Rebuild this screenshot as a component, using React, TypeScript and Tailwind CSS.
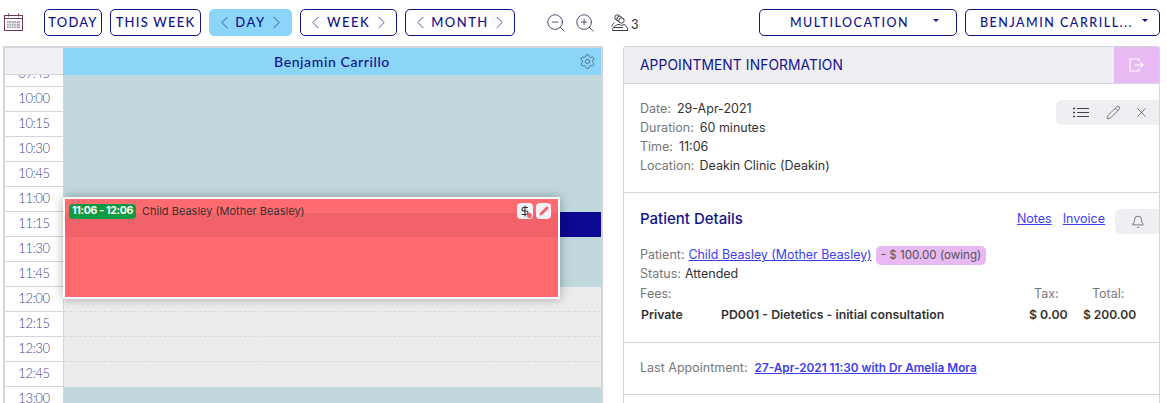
import { ChevronLeft, ChevronRight, ZoomIn, ZoomOut, Settings, Bell, Pencil, X, DollarSign } from "lucide-react";

const navy = "text-[#12128c]";

function NavBtn({ label, w, active }: { label: string; w: string; active?: boolean }) {
  return (
    <div className={`${w} h-[27px] flex items-center justify-between px-[4px] rounded-[5px] border ${active ? "bg-[#8bd5f8] border-[#8bd5f8]" : "bg-white border-[#12128c]"} ${navy}`}>
      <ChevronLeft size={21} strokeWidth={1} className="text-[#3a3a9a]" />
      <span className="text-[13px] font-medium tracking-[1.5px]">{label}</span>
      <ChevronRight size={21} strokeWidth={1} className="text-[#3a3a9a]" />
    </div>
  );
}

function Dropdown({ label, w, center }: { label: string; w: string; center?: boolean }) {
  return (
    <div className={`${w} h-[27px] flex items-center rounded-[5px] border border-[#12128c] ${navy} pr-[11px] pl-[14px]`}>
      <span className={`flex-1 text-[12.5px] font-medium tracking-[1.5px] whitespace-nowrap pt-[2px] ${center ? "text-center pr-[8px]" : ""}`}>{label}</span>
      <span className={`w-0 h-0 border-l-[3px] border-r-[3px] border-t-[3px] border-l-transparent border-r-transparent border-t-[#12128c] -mt-[4px] ${center ? "mr-[6px]" : ""}`} />
    </div>
  );
}

const times = ["09:45", "10:00", "10:15", "10:30", "10:45", "11:00", "11:15", "11:30", "11:45", "12:00", "12:15", "12:30", "12:45", "13:00"];
const hues = ["#c0d8dc", "#c0d8dc", "#c0d8dc", "#c0d8dc", "#c0d8dc", "#c0d8dc", "#0c0890", "#c0d8dc", "#c0d8dc", "#ececec", "#ececec", "#ececec", "#ececec", "#c0d8dc"];

export default function App() {
  return (
    <div className="w-[1167px] h-[403px] overflow-hidden bg-white font-['Lato',sans-serif] flex flex-col">
      {/* toolbar */}
      <div className="h-[46px] shrink-0 flex items-start pt-[9px] pl-[4px]">
        <svg width="20" height="18" viewBox="0 0 20 18" className="mt-[4px] shrink-0" fill="none">
          <rect x="0.5" y="2.5" width="18" height="15" stroke="#6b3a5a" />
          <line x1="1" y1="5.5" x2="18" y2="5.5" stroke="#6b3a5a" />
          <line x1="4.5" y1="0.5" x2="4.5" y2="3.5" stroke="#6b3a5a" />
          <line x1="14.5" y1="0.5" x2="14.5" y2="3.5" stroke="#6b3a5a" />
          <rect x="3" y="8" width="13" height="7" fill="#a8a8b8" />
          <path d="M5 8v7M7.5 8v7M10 8v7M12.5 8v7M3 10.5h13M3 13h13" stroke="#fff" strokeWidth="0.6" />
        </svg>
        <div className="ml-[20px] w-[58px] h-[27px] flex items-center justify-center rounded-[5px] border border-[#12128c] text-[#12128c] text-[13px] font-medium tracking-[1.2px]">TODAY</div>
        <div className="ml-[8px] w-[91px] h-[27px] flex items-center justify-center rounded-[5px] border border-[#12128c] text-[#12128c] text-[13px] font-medium tracking-[1.2px] whitespace-nowrap">THIS WEEK</div>
        <div className="ml-[8px] flex gap-[8px]">
          <NavBtn label="DAY" w="w-[83px]" active />
          <NavBtn label="WEEK" w="w-[97px]" />
          <NavBtn label="MONTH" w="w-[110px]" />
        </div>
        <div className="ml-[30px] mt-[2px] flex items-center">
          <ZoomOut size={22} strokeWidth={1} className="text-[#3f4468]" />
          <ZoomIn size={22} strokeWidth={1} className="ml-[7px] text-[#3f4468]" />
          <svg width="18" height="18" viewBox="0 0 18 18" fill="none" stroke="#3a3a4a" strokeWidth="1" className="ml-[15px]">
            <circle cx="6.5" cy="3.5" r="2.7" />
            <circle cx="8.5" cy="5" r="2.7" fill="#fff" />
            <circle cx="10.5" cy="6.5" r="2.7" fill="#fff" />
            <path d="M3.5 8.5C2 9.5 1 11 1 12.5" />
            <path d="M1.5 16.5c0-3 3-6 6.5-6 1 1 4 1 5 0 2 1 4 3.5 4 6z" fill="#fff" />
            <path d="M3 13.5h9" />
          </svg>
          <span className="ml-[2px] mt-[4px] text-[13px] text-[#333]">3</span>
        </div>
        <div className="ml-auto mr-[7px] flex gap-[8px]">
          <Dropdown label="MULTILOCATION" w="w-[198px]" center />
          <Dropdown label="BENJAMIN CARRILL..." w="w-[195px]" />
        </div>
      </div>

      <div className="flex-1 flex min-h-0 pl-[3px]">
        {/* calendar */}
        <div className="relative w-[600px] shrink-0 border-t-2 border-r-2 border-[#d4d4dc] border-l-2 overflow-hidden">
          <div className="flex h-[27px]">
            <div className="w-[58px] shrink-0 bg-[#f1f1f5] border-b border-[#d4d4dc]" />
            <div className="flex-1 relative bg-[#8bd5f8] flex items-center justify-center text-[14px] font-medium tracking-[0.6px] text-[#12128c]">
              Benjamin Carrillo
              <Settings size={17} strokeWidth={1} className="absolute right-[5px] top-[5px] text-[#3a4a6a]" />
            </div>
          </div>
          <div className="h-[400px] overflow-hidden">
            <div className="-mt-[13px]">
              {times.map((t, i) => (
                <div key={t} className="flex h-[25px]">
                  <div className="w-[59px] shrink-0 bg-white border-b border-r border-[#d4d4dc] flex items-center justify-center text-[13px] font-light text-[#45458a] tracking-[-0.4px]">{t}</div>
                  <div
                    className="flex-1"
                    style={{
                      backgroundColor: hues[i],
                      borderBottom: hues[i] === "#ececec" && i < 12 ? "1px dashed #d8d8e0" : "none",
                      borderTop: i === 6 ? "1px dotted #0c0890" : "none",
                    }}
                  />
                </div>
              ))}
            </div>
          </div>
          {/* appointment */}
          <div className="absolute left-[58px] top-[149px] w-[497px] h-[102px] border-[2px] border-white bg-[#ff6b6e] shadow-[0_0_10px_rgba(0,0,0,0.3)] font-['Inter',sans-serif]">
            <div className="absolute left-0 right-0 top-[14px] h-[24px] bg-[#f26269]" />
            <div className="relative flex items-center pl-[4px] pt-[4px]">
              <span className="h-[15px] w-[67px] rounded-[4px] bg-[#0e9a43] text-white text-[10.5px] font-bold flex items-center justify-center whitespace-nowrap tracking-[-0.3px]">11:06 - 12:06</span>
              <span className="ml-[6px] text-[11px] text-[#333]">Child Beasley (Mother Beasley)</span>
              <div className="ml-auto mr-[7px] flex gap-[3px]">
                <div className="relative w-[16px] h-[16px] rounded-[4px] bg-[#f5f3f7] flex items-center justify-center">
                  <DollarSign size={12} strokeWidth={2.25} className="text-[#333]" />
                  <span className="absolute right-[1px] bottom-[1px] w-[5px] h-[5px] rounded-full bg-[#f2606a]" />
                </div>
                <div className="w-[15px] h-[16px] rounded-[4px] bg-[#f5f3f7] flex items-center justify-center">
                  <svg width="10" height="10" viewBox="0 0 10 10"><path d="M0.5 9.5 1 7 7 1a1.1 1.1 0 0 1 2 2L3 9z" fill="#f2606a" /></svg>
                </div>
              </div>
            </div>
          </div>
        </div>

        {/* info panel */}
        <div className="relative ml-[20px] w-[537px] shrink-0 border border-[#d4d4dc] border-b-0 rounded-t-[3px] font-['Inter',sans-serif] text-[12.5px] text-[#333] overflow-visible">
          <div className="h-[37px] flex bg-[#efeef3] border-b border-[#d4d4dc]">
            <div className="flex-1 flex items-center pl-[16px] pt-[1px] text-[13.8px] font-normal text-[#12128c] tracking-[0.1px]">APPOINTMENT INFORMATION</div>
            <div className="w-[45px] bg-[#e9b9f4] flex items-center justify-center">
              <svg width="16" height="14" viewBox="0 0 16 14" fill="none" stroke="#fff" strokeWidth="1.2">
                <path d="M10 3V1H1v12h9v-2" />
                <path d="M6 7h8M11.5 4.5 14 7l-2.5 2.5" />
              </svg>
            </div>
          </div>
          <div className="h-[109px] border-b border-[#d4d4dc] pl-[16px] pt-[15px] leading-[19px] relative">
            <div><span className="text-[#777]">Date:</span><span className="ml-[6px]">29-Apr-2021</span></div>
            <div><span className="text-[#777]">Duration:</span><span className="ml-[6px]">60 minutes</span></div>
            <div><span className="text-[#777]">Time:</span><span className="ml-[6px]">11:06</span></div>
            <div><span className="text-[#777]">Location:</span><span className="ml-[5px]">Deakin Clinic (Deakin)</span></div>
          </div>
          <div className="absolute right-0 top-[53px] w-[103px] h-[25px] bg-[#efeef3] rounded-l-[6px] flex items-center text-[#555]">
            <svg width="16" height="11" viewBox="0 0 16 11" fill="none" stroke="#444" strokeWidth="1" className="ml-[17px]">
              <path d="M4 1.5h12M4 5.5h12M4 9.5h12" />
              <path d="M0 1.5h2M0 5.5h2M0 9.5h2" strokeWidth="1.4" />
            </svg>
            <Pencil size={15} strokeWidth={1} className="ml-[17px] text-[#333]" />
            <X size={15} strokeWidth={1} className="ml-[13px] text-[#333]" />
          </div>

          <div className="h-[150px] border-b border-[#d4d4dc] relative pl-[16px] pt-[16px]">
            <div className="flex items-center h-[20px]">
              <span className="text-[15px] font-medium text-[#12128c]">Patient Details</span>
              <span className="ml-auto mt-[1px] text-[#3d3df0] underline">Notes</span>
              <span className="ml-[11px] mt-[1px] mr-[54px] text-[#3d3df0] underline">Invoice</span>
            </div>
            <div className="absolute right-0 top-[16px] w-[44px] h-[25px] bg-[#efeef3] rounded-l-[6px] flex items-center justify-center pl-[2px] text-[#222]">
              <Bell size={14} strokeWidth={1} />
            </div>
            <div className="mt-[17px] flex items-center h-[19px]">
              <span className="text-[#777]">Patient:</span>
              <span className="ml-[4px] text-[12.4px] text-[#3d3df0] underline">Child Beasley (Mother Beasley)</span>
              <span className="ml-[4px] h-[19px] px-[5px] rounded-[5px] bg-[#e9b9f4] flex items-center text-[#555] text-[11.6px]">- $ 100.00 (owing)</span>
            </div>
            <div className="h-[18px] flex items-center"><span className="text-[#777]">Status:</span><span className="ml-[4px]">Attended</span></div>
            <div className="mt-[1px] h-[20px] flex items-center text-[#777]">
              <span>Fees:</span>
              <span className="ml-auto w-[58px]">Tax:</span>
              <span className="w-[52px] mr-[15px]">Total:</span>
            </div>
            <div className="mt-[1px] h-[20px] flex items-center font-semibold text-[12.3px] pl-[1px]">
              <span className="w-[80px]">Private</span>
              <span>PD001 - Dietetics - initial consultation</span>
              <span className="ml-auto w-[54px]">$ 0.00</span>
              <span className="w-[52px] mr-[24px] text-[12px] whitespace-nowrap">$ 200.00</span>
            </div>
          </div>

          <div className="h-[52px] border-b border-[#d4d4dc] pl-[16px] flex items-center">
            <span className="text-[#777]">Last Appointment:</span>
            <span className="ml-[7px] font-semibold text-[11.8px] text-[#3d3df0] underline">27-Apr-2021 11:30 with Dr Amelia Mora</span>
          </div>
        </div>
      </div>
    </div>
  );
}
